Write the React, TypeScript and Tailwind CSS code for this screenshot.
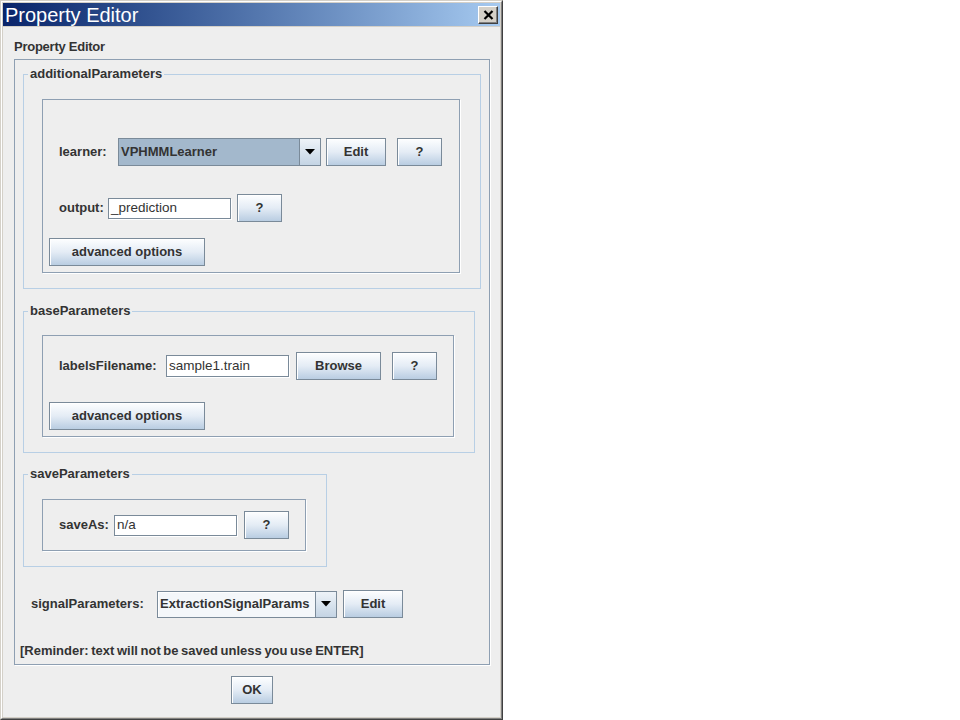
import type { ReactNode } from 'react';

function Btn({ className, children }: { className: string; children: ReactNode }) {
  return (
    <div
      className={`flex shrink-0 items-center justify-center border border-[#7a8a99] bg-linear-to-b from-[#fdfeff] via-[#e4ecf5] to-[#b9cde2] text-[13px] font-bold text-[#333] shadow-[inset_1px_1px_0_#ffffff] ${className}`}
    >
      {children}
    </div>
  );
}

function Field({ className, value }: { className: string; value: string }) {
  return (
    <div
      className={`flex shrink-0 items-center border border-[#7a8a99] bg-white pl-[2px] text-[13.5px] leading-none text-[#333] shadow-[1px_1px_0_#ffffff] ${className}`}
    >
      {value}
    </div>
  );
}

function Arrow() {
  return (
    <svg width="10" height="6" viewBox="0 0 10 6">
      <path d="M0 0 H10 L5 5.5 Z" fill="#000" />
    </svg>
  );
}

function Label({ className, children }: { className: string; children: ReactNode }) {
  return <div className={`shrink-0 text-[13px] font-bold leading-[16px] text-[#333] ${className}`}>{children}</div>;
}

function Group({ title, className, children }: { title: string; className: string; children: ReactNode }) {
  return (
    <fieldset className={`ml-[8px] border border-[#b8cfe5] ${className}`}>
      <legend className="ml-[4px] h-[14px] px-[2px] text-[13px] font-bold leading-[14px] text-[#333]">{title}</legend>
      {children}
    </fieldset>
  );
}

export default function App() {
  return (
    <div className="h-[720px] w-[960px] bg-white font-['Liberation_Sans',Arial,sans-serif]">
      <div className="h-[720px] w-[503px] border border-[#d4d0c8] border-r-[#404040] border-b-[#404040]">
        <div className="flex h-full flex-col border border-white border-r-[#808080] border-b-[#808080] bg-[#d4d0c8] p-px">
          {/* title bar */}
          <div className="flex h-[23px] shrink-0 items-center justify-between bg-linear-to-r from-[#0a246a] to-[#a6caf0] pl-[2px] pr-[2px]">
            <span className="text-[20px] leading-none text-white">Property Editor</span>
            <div className="flex h-[18px] w-[20px] items-center justify-center border border-white border-r-[#404040] border-b-[#404040] bg-[#d4d0c8] shadow-[inset_-1px_-1px_0_#808080]">
              <svg width="11" height="10" viewBox="0 0 11 10">
                <path d="M1.5 1 L9.5 9 M9.5 1 L1.5 9" stroke="#000" strokeWidth="2.2" />
              </svg>
            </div>
          </div>
          <div className="h-px shrink-0" />

          {/* content */}
          <div className="flex flex-1 flex-col bg-[#eeeeee] pt-[12px]">
            <div className="pl-[11px] text-[13px] font-bold leading-[16px] tracking-[-0.25px] text-[#333]">Property Editor</div>

            <div className="ml-[11px] mt-[4px] flex w-[476px] flex-col border border-[#8e9fb2] pb-[5px] shadow-[1px_1px_0_#ffffff]">
              {/* additionalParameters */}
              <Group title="additionalParameters" className="mt-[7px] w-[458px] pb-[15px]">
                <div className="ml-[18px] mt-[18px] flex w-[418px] flex-col border border-[#8e9fb2] pb-[6px] shadow-[1px_1px_0_#ffffff]">
                  <div className="mt-[38px] flex h-[28px] items-center pl-[16px]">
                    <Label className="w-[59px]">learner:</Label>
                    <div className="flex h-[28px] w-[203px] border border-[#7a8a99]">
                      <div className="flex flex-1 items-center bg-[#a3b8cc] pl-[2px] text-[13px] font-bold text-[#333]">
                        VPHMMLearner
                      </div>
                      <div className="flex w-[21px] items-center justify-center border-l border-[#7a8a99] bg-linear-to-b from-[#eef3f8] to-[#c4d4e4]">
                        <Arrow />
                      </div>
                    </div>
                    <Btn className="ml-[5px] h-[28px] w-[60px]">Edit</Btn>
                    <Btn className="ml-[11px] h-[28px] w-[45px]">?</Btn>
                  </div>
                  <div className="mt-[28px] flex h-[28px] items-center pl-[16px]">
                    <Label className="w-[49px]">output:</Label>
                    <Field className="h-[21px] w-[123px]" value="_prediction" />
                    <Btn className="ml-[6px] h-[28px] w-[45px]">?</Btn>
                  </div>
                  <Btn className="ml-[6px] mt-[16px] h-[28px] w-[156px]">advanced options</Btn>
                </div>
              </Group>

              {/* baseParameters */}
              <Group title="baseParameters" className="mt-[15px] w-[452px] pb-[15px]">
                <div className="ml-[18px] mt-[17px] flex w-[412px] flex-col border border-[#8e9fb2] pb-[6px] shadow-[1px_1px_0_#ffffff]">
                  <div className="mt-[16px] flex h-[28px] items-center pl-[16px]">
                    <Label className="w-[107px]">labelsFilename:</Label>
                    <Field className="h-[22px] w-[123px]" value="sample1.train" />
                    <Btn className="ml-[7px] h-[28px] w-[85px]">Browse</Btn>
                    <Btn className="ml-[11px] h-[28px] w-[45px]">?</Btn>
                  </div>
                  <Btn className="ml-[6px] mt-[22px] h-[28px] w-[156px]">advanced options</Btn>
                </div>
              </Group>

              {/* saveParameters */}
              <Group title="saveParameters" className="mt-[14px] w-[304px] pb-[15px]">
                <div className="ml-[18px] mt-[18px] flex w-[264px] flex-col border border-[#8e9fb2] pb-[11px] shadow-[1px_1px_0_#ffffff]">
                  <div className="mt-[11px] flex h-[28px] items-center pl-[16px]">
                    <Label className="w-[55px]">saveAs:</Label>
                    <Field className="h-[21px] w-[123px]" value="n/a" />
                    <Btn className="ml-[7px] h-[28px] w-[45px]">?</Btn>
                  </div>
                </div>
              </Group>

              {/* signalParameters */}
              <div className="ml-[16px] mt-[23px] flex h-[28px] items-center">
                <Label className="w-[126px]">signalParameters:</Label>
                <div className="flex h-[27px] w-[180px] border border-[#7a8a99]">
                  <div className="flex flex-1 items-center bg-[#f4f7fa] pl-[2px] text-[13px] font-bold text-[#333] shadow-[inset_1px_1px_0_#ffffff]">
                    ExtractionSignalParams
                  </div>
                  <div className="flex w-[21px] items-center justify-center border-l border-[#7a8a99] bg-linear-to-b from-[#eef3f8] to-[#c4d4e4]">
                    <Arrow />
                  </div>
                </div>
                <Btn className="ml-[6px] h-[28px] w-[60px]">Edit</Btn>
              </div>

              <div className="ml-[5px] mt-[25px] text-[13px] font-bold leading-[16px] text-[#333] [word-spacing:-1px]">
                [Reminder: text will not be saved unless you use ENTER]
              </div>
            </div>

            <div className="mt-[11px] flex justify-center pl-px">
              <Btn className="h-[28px] w-[42px] border-[#5d6d7e] shadow-[inset_0_0_0_1px_#8e9fb2]">OK</Btn>
            </div>
          </div>
        </div>
      </div>
    </div>
  );
}
